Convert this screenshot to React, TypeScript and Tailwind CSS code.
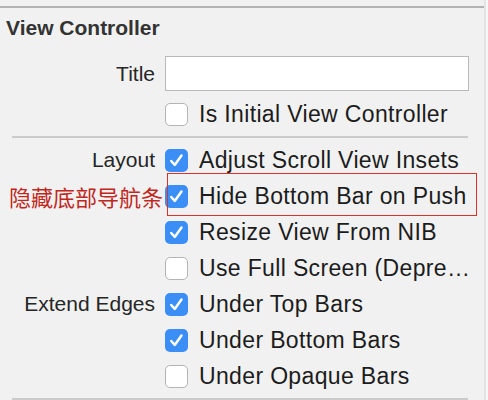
import React from 'react';

type Row = { label?: string; note?: string; text: string; checked: boolean; boxed?: boolean };

const layoutRows: Row[] = [
  { label: 'Layout', text: 'Adjust Scroll View Insets', checked: true },
  { note: '隐藏底部导航条', text: 'Hide Bottom Bar on Push', checked: true, boxed: true },
  { text: 'Resize View From NIB', checked: true },
  { text: 'Use Full Screen (Depre…', checked: false },
  { label: 'Extend Edges', text: 'Under Top Bars', checked: true },
  { text: 'Under Bottom Bars', checked: true },
  { text: 'Under Opaque Bars', checked: false },
];

function Checkbox({ checked }: { checked: boolean }) {
  if (checked) {
    return (
      <div className="w-[23px] h-[23px] rounded-[5px] bg-[#3c8ef7] flex items-center justify-center shrink-0">
        <svg width="23" height="23" viewBox="0 0 24 24" fill="none">
          <path d="M6.5 12.5 L10.2 16.6 L17.2 6.8" stroke="#fff" strokeWidth="2.6" strokeLinecap="round" strokeLinejoin="round" />
        </svg>
      </div>
    );
  }
  return <div className="w-[23px] h-[23px] rounded-[5px] bg-white border border-[#b4b4b4] shrink-0" />;
}

function CheckRow({ row }: { row: Row }) {
  return (
    <div className="relative flex items-center h-[36px]">
      <div className="w-[155px] shrink-0 flex justify-end">
        {row.label && <span className="text-[21px] leading-[24px] text-[#262626]">{row.label}</span>}
        {row.note && (
          <span className="text-[22px] leading-[24px] text-[#c0281e] whitespace-nowrap -mr-[8px] [font-family:'Noto_Sans_CJK_SC',sans-serif]">
            {row.note}
          </span>
        )}
      </div>
      <div className="ml-[10px] flex items-center">
        <Checkbox checked={row.checked} />
        <span className="ml-[11px] text-[23px] leading-[26px] tracking-[0.35px] text-[#1c1c1c] whitespace-nowrap">{row.text}</span>
      </div>
      {row.boxed && (
        <div className="absolute left-[167px] top-[-5px] w-[310px] h-[43px] border border-[#d9322a] pointer-events-none" />
      )}
    </div>
  );
}

export default function App() {
  return (
    <div className="w-[488px] h-[400px] overflow-hidden bg-[#f1f1f1] flex [font-family:'Liberation_Sans',Arial,sans-serif]">
      <div className="w-[484px] flex flex-col">
        <div className="h-[6px]" />
        <div className="h-[2px] bg-[#b2b2b2]" />
        <div className="mt-[8px] pl-[6px] h-[24px] text-[21px] leading-[24px] font-bold text-[#333]">View Controller</div>

        <div className="mt-[16px] flex items-center h-[35px]">
          <div className="w-[155px] flex justify-end">
            <span className="text-[21px] leading-[24px] text-[#262626]">Title</span>
          </div>
          <div className="ml-[10px] w-[304px] h-[35px] bg-white border border-[#b8b8b8]" />
        </div>

        <div className="mt-[5px]">
          <CheckRow row={{ text: 'Is Initial View Controller', checked: false }} />
        </div>

        <div className="mt-[4px] ml-[12px] w-[456px] h-[2px] bg-[#cbcbcb]" />

        <div className="mt-[4px] flex flex-col">
          {layoutRows.map((r, i) => (
            <CheckRow key={i} row={r} />
          ))}
        </div>

        <div className="mt-[4px] ml-[12px] w-[456px] h-[2px] bg-[#cbcbcb]" />
      </div>
      <div className="w-[4px] border-l-2 border-[#e4e4e4] bg-[#f7f7f7]" />
    </div>
  );
}
